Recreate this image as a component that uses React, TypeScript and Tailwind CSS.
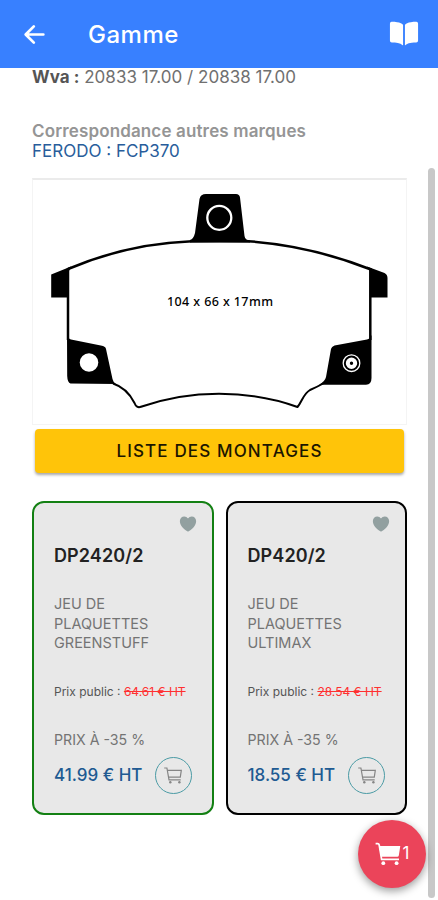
import { IoArrowBack, IoBook, IoHeart } from 'react-icons/io5';

type Product = {
  ref: string;
  name: string;
  publicPrice: string;
  price: string;
  border: string;
};

const products: Product[] = [
  {
    ref: 'DP2420/2',
    name: 'JEU DE PLAQUETTES GREENSTUFF',
    publicPrice: '64.61 € HT',
    price: '41.99 € HT',
    border: 'border-[#138013]',
  },
  {
    ref: 'DP420/2',
    name: 'JEU DE PLAQUETTES ULTIMAX',
    publicPrice: '28.54 € HT',
    price: '18.55 € HT',
    border: 'border-black',
  },
];

function CartOutline() {
  return (
    <svg viewBox="0 0 18 17" width="18" height="17" fill="none" stroke="currentColor" strokeWidth="1.2">
      <path d="M0.200 1H2.900L5 12.800H16.700" />
      <path d="M3.300 3.300H17.300L16.300 10.200H4.600" />
      <circle cx="6.300" cy="15.200" r="1.200" fill="currentColor" stroke="none" />
      <circle cx="15.400" cy="15.200" r="1.200" fill="currentColor" stroke="none" />
    </svg>
  );
}

function CartFilled() {
  return (
    <svg viewBox="0 0 26 24" width="26" height="24" fill="currentColor">
      <path d="M4 4H25.300L23.800 13.500Q23.600 14.800 22.300 14.800H6Z" />
      <path d="M0.600 1.700H2.700Q3.900 1.700 4.200 3L6.600 17.300H24" fill="none" stroke="currentColor" strokeWidth="1.700" />
      <circle cx="8.300" cy="21.200" r="1.900" />
      <circle cx="21.600" cy="21.200" r="1.900" />
    </svg>
  );
}

function Header() {
  return (
    <header className="flex h-[68px] shrink-0 items-center bg-[#3880ff] pl-5 pr-[19px] text-white">
      <IoArrowBack size={29} />
      <h1 className="ml-[39px] flex-1 pt-px text-[24px] font-medium leading-8 tracking-[0.5px]">Gamme</h1>
      <IoBook size={30} />
    </header>
  );
}

function BrakePad() {
  return (
    <svg viewBox="33 180 373 244" className="block h-[244px] w-full">
      <g fill="none" stroke="#000" strokeWidth="2.5" strokeLinejoin="round">
        <path d="M68 269Q128 243.5 192 241.2L219 241L248 241.2Q310 245.5 371 269.5" />
        <path d="M68 268V340" />
        <path d="M370.300 268V340" />
        <path
          d="M113 383.500C124 387 130 394 134.500 403Q136.500 408.500 141 406.800Q178 393.700 219 393.700Q262 394 297.500 407C302 402 303 394 310 390Q317 387 325 382.500"
          strokeWidth="2"
        />
      </g>
      <path d="M206 194H236Q239.500 194 240 197.500L244.500 236Q245 240 250 240.500V242.500H190V240Q193.500 239 195 233L199.500 199Q200.500 194 206 194Z" />
      <path d="M51.200 274.500L71 266.500L69 271V297.500H51.200Z" />
      <path d="M367 266.500L384.500 273Q387.500 274.500 387.500 278V297.500H370V271Z" />
      <path d="M67 335Q68.500 339 71 339.500L102 345.800Q105.500 346.500 106 349L112.500 379Q113 382 116 384L70.500 383.500Q67.500 383 67.200 376Z" />
      <path d="M371.500 335Q370 339 367 339.500L334.500 345.500Q331.500 346.500 331 349L326 377Q325 381.500 319 384.800H366Q371.500 384.500 371.500 378Z" />
      <circle cx="219.300" cy="217.800" r="12" fill="none" stroke="#fff" strokeWidth="2.3" />
      <circle cx="89" cy="362.500" r="9.300" fill="#fff" />
      <g fill="none" stroke="#fff">
        <circle cx="351.500" cy="363.200" r="8.300" strokeWidth="1.300" />
        <circle cx="351.500" cy="363.200" r="3.700" strokeWidth="4" />
      </g>
      <text
        x="167"
        y="306"
        textLength="106"
        className="font-['Noto_Sans',sans-serif] text-[12.5px] font-medium"
      >
        104 x 66 x 17mm
      </text>
    </svg>
  );
}

function ProductCard({ product }: { product: Product }) {
  return (
    <article className={`flex h-[314px] flex-col rounded-xl border-2 bg-[#e8e8e8] pl-5 pr-[14px] ${product.border}`}>
      <IoHeart size={20} className="mt-[11px] self-end text-[#92a0a0]" />
      <h2 className="mt-[10px] text-[18px] font-semibold leading-6 tracking-[0.1px] text-[#222]">{product.ref}</h2>
      <p className="mt-[26px] w-[110px] text-[14.5px] leading-[19.5px] text-[#747474]">{product.name}</p>
      <p className="mt-[29px] whitespace-nowrap text-[12px] leading-5 text-[#555]">
        Prix public : <span className="text-[#ff3030] line-through">{product.publicPrice}</span>
      </p>
      <p className="mt-7 text-[14.2px] leading-5 text-[#747474]">PRIX À -35 %</p>
      <div className="mt-[7px] flex items-center justify-between pr-[6px]">
        <span className="whitespace-nowrap text-[17px] font-medium leading-6 text-[#205a92]">{product.price}</span>
        <button className="flex size-[37px] shrink-0 items-center justify-center rounded-full border border-[#4b9ba5] text-[#858585]">
          <CartOutline />
        </button>
      </div>
    </article>
  );
}

export default function App() {
  return (
    <div className="relative flex h-[900px] w-[438px] flex-col overflow-hidden bg-white font-['Inter',sans-serif]">
      <Header />
      <main className="flex flex-col pl-8 pr-[31px]">
        <p className="mt-[-1px] text-[17px] leading-5 tracking-[0.03px] text-[#707070]">
          <b className="font-bold text-[#555]">Wva :</b> 20833 17.00 / 20838 17.00
        </p>
        <h2 className="mt-[34px] text-[17px] font-semibold leading-5 tracking-[0.14px] text-[#959595]">
          Correspondance autres marques
        </h2>
        <p className="text-[17px] leading-5 text-[#285d9b]">FERODO : FCP370</p>
        <div className="mt-[17px] border border-[#f4f4f4] border-t-2 border-t-[#ebebeb]">
          <BrakePad />
        </div>
        <button className="mx-[3px] mt-1 h-11 rounded bg-[#ffc409] pt-0.5 text-[17px] font-medium tracking-[1.15px] text-[#1c1600] shadow-[0_2px_3px_rgba(0,0,0,0.35)]">
          LISTE DES MONTAGES
        </button>
        <div className="mt-7 grid grid-cols-2 gap-3">
          {products.map((product) => (
            <ProductCard key={product.ref} product={product} />
          ))}
        </div>
      </main>
      <div className="absolute right-[3px] top-[168px] h-[730px] w-[7px] rounded-full bg-[#c8c8c8]" />
      <button className="absolute left-[358px] top-[820px] flex size-[68px] items-center justify-center gap-0.5 rounded-full bg-[#eb445a] text-[17px] text-white shadow-[0_3px_8px_rgba(0,0,0,0.4)]">
        <CartFilled />
        <span>1</span>
      </button>
    </div>
  );
}
